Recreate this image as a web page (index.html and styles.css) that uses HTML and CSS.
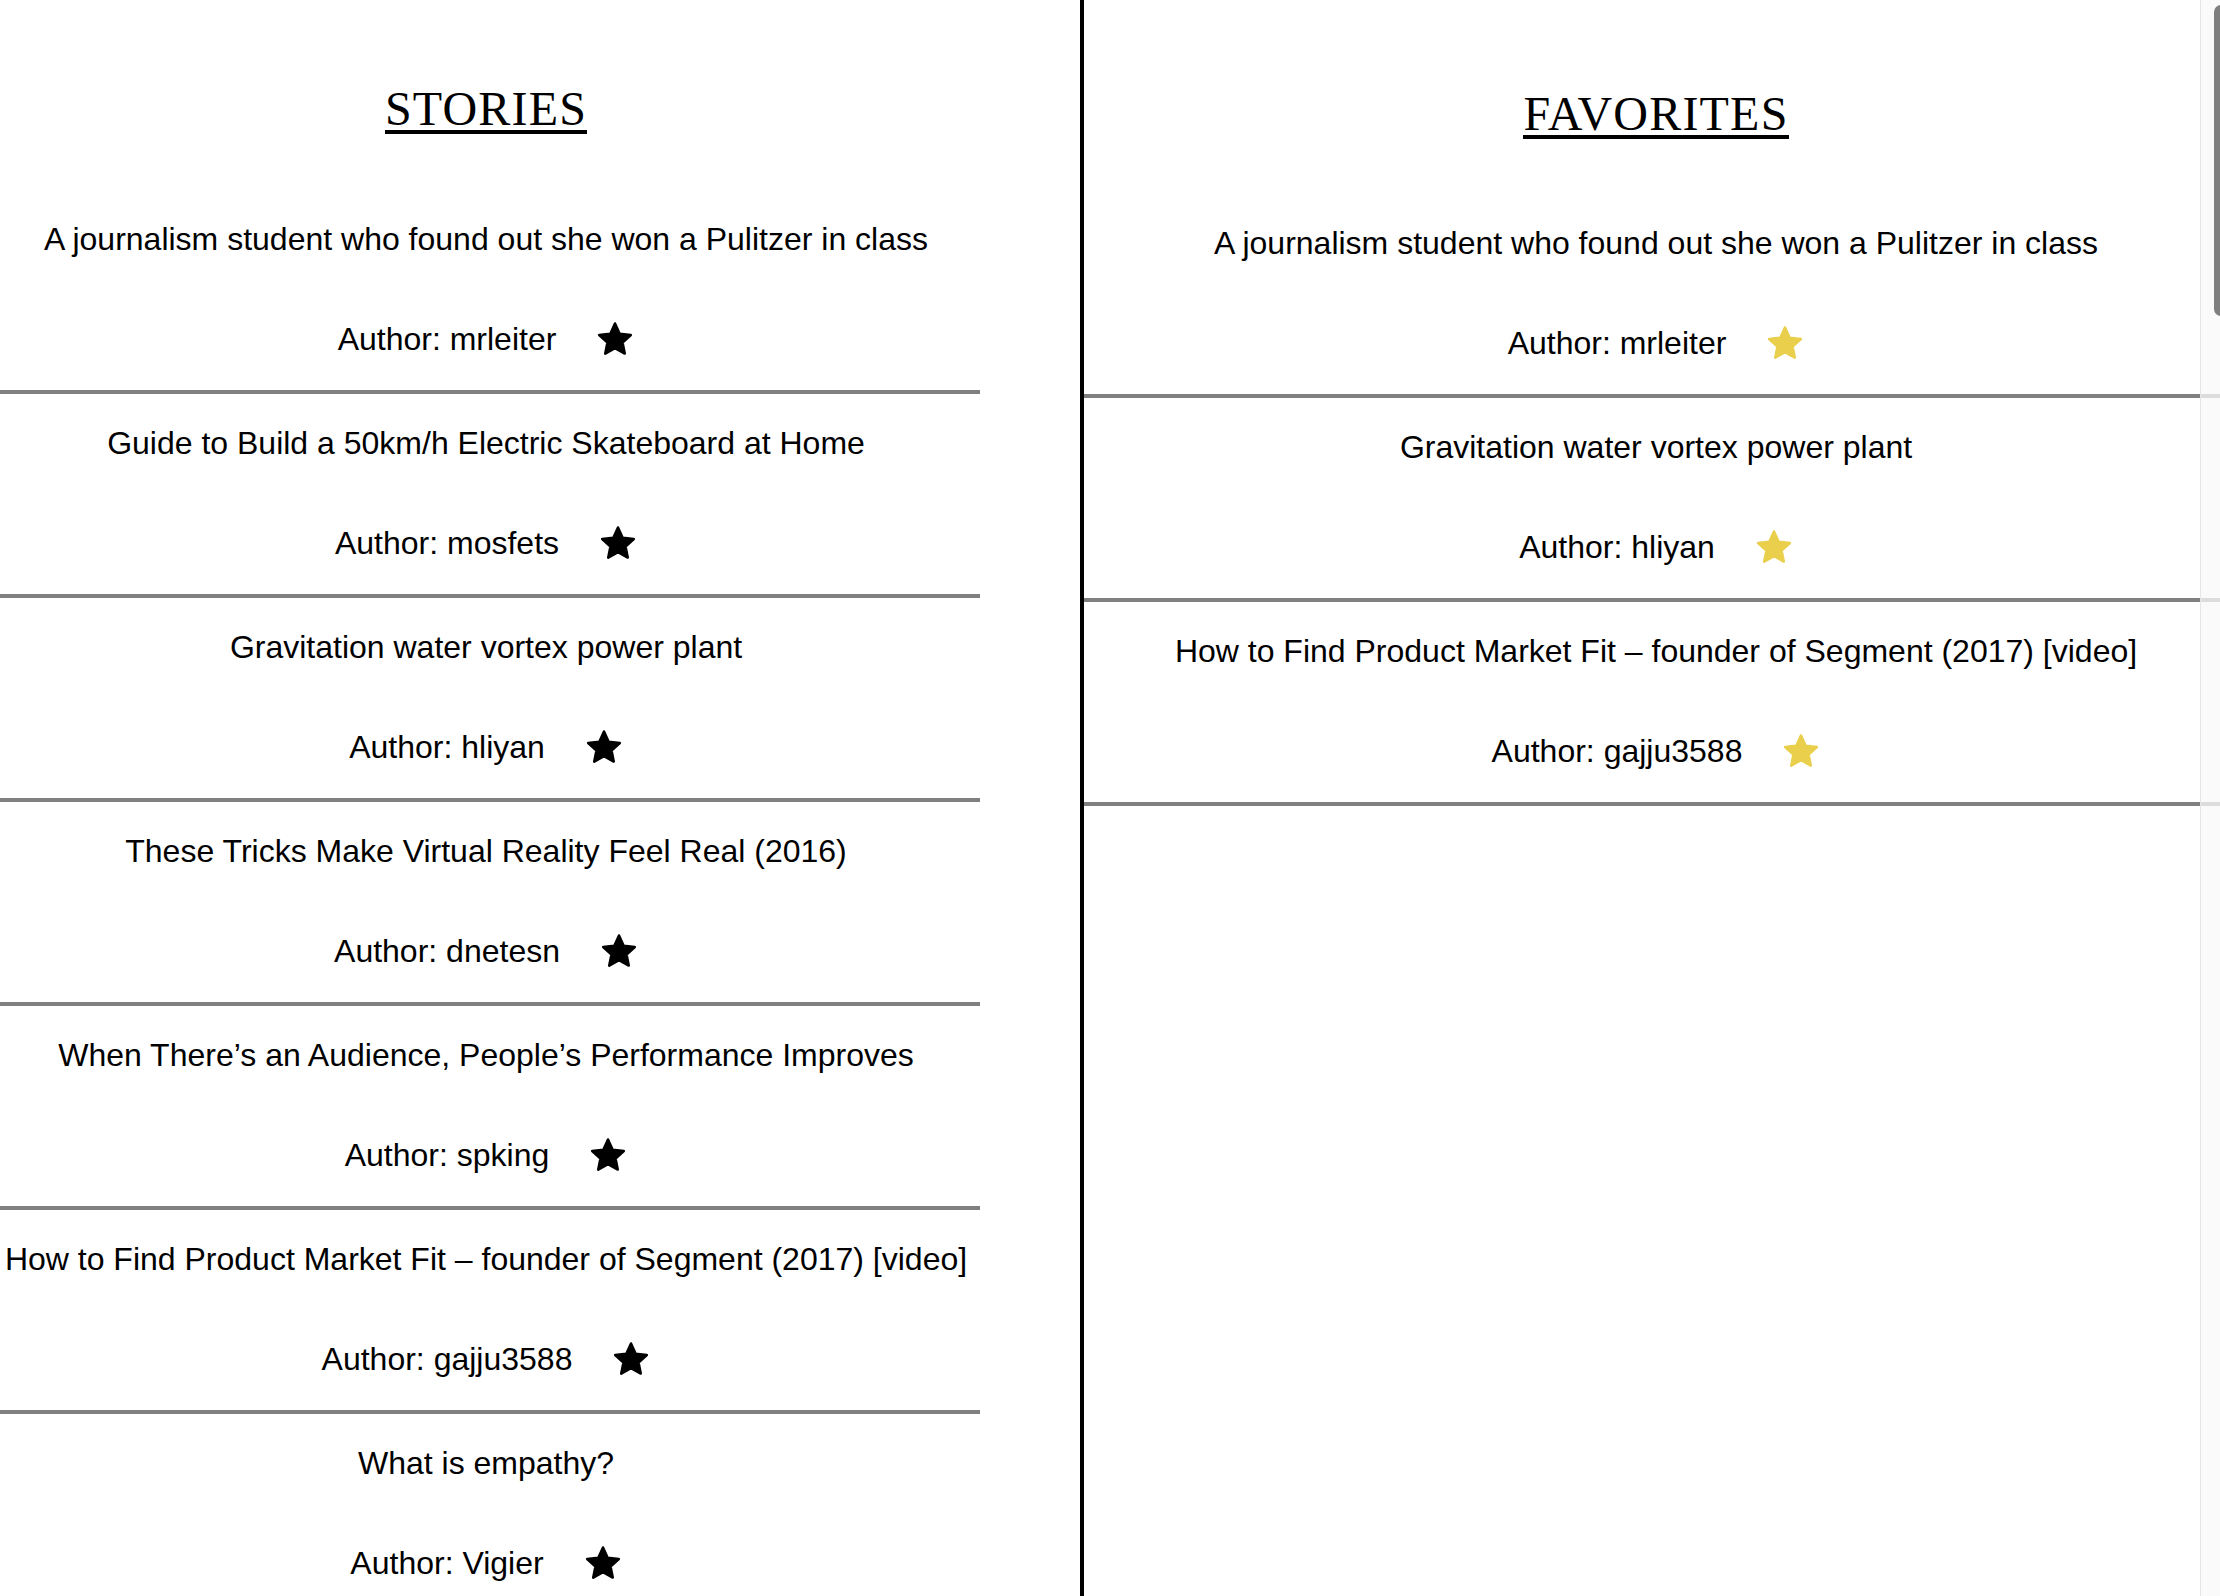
FILE: index.html
```html
<!DOCTYPE html>
<html lang="en">
<head>
<meta charset="utf-8">
<title>Stories</title>
<link rel="stylesheet" href="styles.css">
</head>
<body>
<svg class="defs" width="0" height="0" aria-hidden="true">
  <symbol id="star" viewBox="0 0 24 24">
    <path d="M12 2.2 L14.94 8.65 L21.99 9.46 L16.76 14.25 L18.17 21.19 L12 17.7 L5.83 21.19 L7.24 14.25 L2.01 9.46 L9.06 8.65 Z" stroke-width="1.6" stroke-linejoin="round"/>
  </symbol>
</svg>
<div class="app">
  <section class="column stories">
    <h2 class="heading"><span>STORIES</span></h2>
    <ul class="list">
      <li class="item">
        <p class="title">A journalism student who found out she won a Pulitzer in class</p>
        <div class="author"><span>Author: mrleiter</span><svg class="star"><use href="#star"/></svg></div>
      </li>
      <li class="item">
        <p class="title">Guide to Build a 50km/h Electric Skateboard at Home</p>
        <div class="author"><span>Author: mosfets</span><svg class="star"><use href="#star"/></svg></div>
      </li>
      <li class="item">
        <p class="title">Gravitation water vortex power plant</p>
        <div class="author"><span>Author: hliyan</span><svg class="star"><use href="#star"/></svg></div>
      </li>
      <li class="item">
        <p class="title">These Tricks Make Virtual Reality Feel Real (2016)</p>
        <div class="author"><span>Author: dnetesn</span><svg class="star"><use href="#star"/></svg></div>
      </li>
      <li class="item">
        <p class="title">When There’s an Audience, People’s Performance Improves</p>
        <div class="author"><span>Author: spking</span><svg class="star"><use href="#star"/></svg></div>
      </li>
      <li class="item">
        <p class="title">How to Find Product Market Fit – founder of Segment (2017) [video]</p>
        <div class="author"><span>Author: gajju3588</span><svg class="star"><use href="#star"/></svg></div>
      </li>
      <li class="item">
        <p class="title">What is empathy?</p>
        <div class="author"><span>Author: Vigier</span><svg class="star"><use href="#star"/></svg></div>
      </li>
    </ul>
  </section>
  <section class="column favorites">
    <h2 class="heading"><span>FAVORITES</span></h2>
    <ul class="list">
      <li class="item">
        <p class="title">A journalism student who found out she won a Pulitzer in class</p>
        <div class="author"><span>Author: mrleiter</span><svg class="star fav"><use href="#star"/></svg></div>
      </li>
      <li class="item">
        <p class="title">Gravitation water vortex power plant</p>
        <div class="author"><span>Author: hliyan</span><svg class="star fav"><use href="#star"/></svg></div>
      </li>
      <li class="item">
        <p class="title">How to Find Product Market Fit – founder of Segment (2017) [video]</p>
        <div class="author"><span>Author: gajju3588</span><svg class="star fav"><use href="#star"/></svg></div>
      </li>
    </ul>
  </section>
</div>
<div class="scrollbar"><div class="thumb"></div></div>
</body>
</html>
```
FILE: styles.css
```css
html, body {
  margin: 0;
  padding: 0;
  background: #ffffff;
  overflow: hidden;
  height: 100%;
}

body {
  font-family: "Liberation Sans", Arial, Helvetica, sans-serif;
  font-size: 32px;
  color: #000000;
}

.defs {
  position: absolute;
  width: 0;
  height: 0;
}

.app {
  display: flex;
  min-height: 100vh;
}

.column {
  display: flex;
  flex-direction: column;
}

.stories {
  flex: 0 0 1080px;
  border-right: 4px solid #000000;
  padding-top: 88px;
}

.favorites {
  flex: 1 1 auto;
  padding-top: 93px;
}

.heading {
  margin: 0;
  font-family: "Liberation Serif", "Times New Roman", Times, serif;
  font-weight: normal;
  font-size: 48px;
  line-height: 42px;
  text-align: center;
}

.stories .heading {
  width: 972px;
}

.favorites .heading {
  padding-left: 8px;
}

.heading span {
  display: inline-block;
  letter-spacing: 1.2px;
  border-bottom: 4px solid #000000;
}

.list {
  list-style: none;
  margin: 56px 0 0 0;
  padding: 0;
}

.favorites .list {
  margin-top: 55px;
}

.item {
  display: flex;
  flex-direction: column;
  align-items: center;
  gap: 64px;
  padding: 31px 8px 33px 0;
  border-bottom: 4px solid #808080;
}

.stories .item {
  width: 972px;
}

.favorites .item {
  padding: 31px 0 33px 8px;
}

.title {
  margin: 0;
  line-height: 36px;
  white-space: nowrap;
}

.author {
  display: flex;
  align-items: center;
  gap: 40px;
  height: 36px;
  line-height: 36px;
  white-space: nowrap;
}

.star {
  width: 38px;
  height: 38px;
  margin: -1px 0;
  fill: #000000;
  stroke: #000000;
}

.star.fav {
  fill: #e9cf4b;
  stroke: #e9cf4b;
}

.scrollbar {
  position: fixed;
  top: 0;
  right: 0;
  width: 19px;
  height: 100%;
  background: rgba(248, 248, 248, 0.76);
  border-left: 1px solid #e6e6e6;
  overflow: hidden;
}

.thumb {
  margin: 5px 0 0 13px;
  width: 14px;
  height: 311px;
  border-radius: 7px;
  background: #7f7f7f;
}
```
